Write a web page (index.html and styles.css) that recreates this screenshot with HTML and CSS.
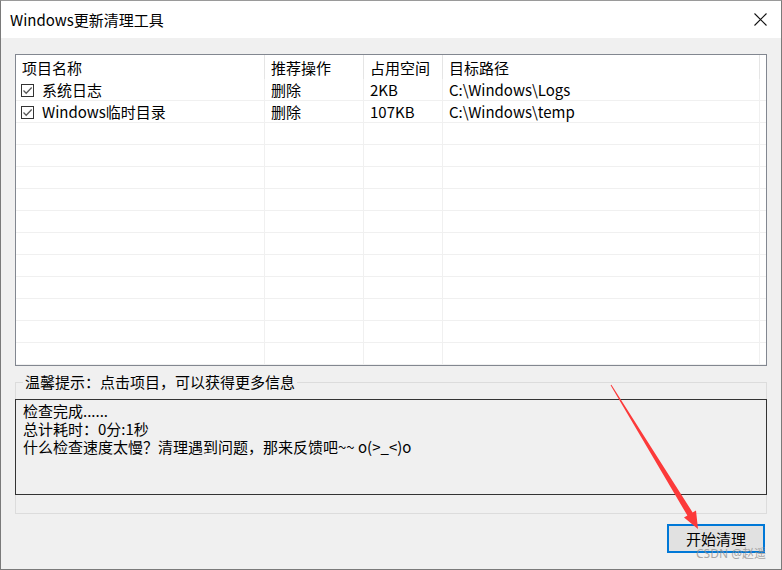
FILE: index.html
```html
<!DOCTYPE html>
<html lang="zh-CN">
<head>
<meta charset="utf-8">
<title>Windows更新清理工具</title>
<link rel="stylesheet" href="styles.css">
</head>
<body>
<div class="window">
  <div class="titlebar">
    <span class="title">Windows更新清理工具</span>
    <span class="close">
      <svg width="13" height="13" viewBox="0 0 13 13"><path d="M0.5 0.5 L12.5 12.5 M12.5 0.5 L0.5 12.5" stroke="#111" stroke-width="1.1" fill="none"/></svg>
    </span>
  </div>
  <div class="client">
    <div class="listview">
      <div class="lv-row lv-head">
        <div class="cell">项目名称</div>
        <div class="cell">推荐操作</div>
        <div class="cell">占用空间</div>
        <div class="cell">目标路径</div>
        <div class="cell filler"></div>
      </div>
      <div class="lv-row">
        <div class="cell first"><span class="chk"><svg width="11" height="11" viewBox="0 0 11 11"><path d="M1.5 5.5 L4.2 8.2 L9.7 2.5" stroke="#5a5a5a" stroke-width="1.3" fill="none"/></svg></span>系统日志</div>
        <div class="cell">删除</div>
        <div class="cell">2KB</div>
        <div class="cell">C:\Windows\Logs</div>
        <div class="cell filler"></div>
      </div>
      <div class="lv-row">
        <div class="cell first"><span class="chk"><svg width="11" height="11" viewBox="0 0 11 11"><path d="M1.5 5.5 L4.2 8.2 L9.7 2.5" stroke="#5a5a5a" stroke-width="1.3" fill="none"/></svg></span>Windows临时目录</div>
        <div class="cell">删除</div>
        <div class="cell">107KB</div>
        <div class="cell">C:\Windows\temp</div>
        <div class="cell filler"></div>
      </div>
      <div class="lv-row"><div class="cell"></div><div class="cell"></div><div class="cell"></div><div class="cell"></div><div class="cell filler"></div></div>
      <div class="lv-row"><div class="cell"></div><div class="cell"></div><div class="cell"></div><div class="cell"></div><div class="cell filler"></div></div>
      <div class="lv-row"><div class="cell"></div><div class="cell"></div><div class="cell"></div><div class="cell"></div><div class="cell filler"></div></div>
      <div class="lv-row"><div class="cell"></div><div class="cell"></div><div class="cell"></div><div class="cell"></div><div class="cell filler"></div></div>
      <div class="lv-row"><div class="cell"></div><div class="cell"></div><div class="cell"></div><div class="cell"></div><div class="cell filler"></div></div>
      <div class="lv-row"><div class="cell"></div><div class="cell"></div><div class="cell"></div><div class="cell"></div><div class="cell filler"></div></div>
      <div class="lv-row"><div class="cell"></div><div class="cell"></div><div class="cell"></div><div class="cell"></div><div class="cell filler"></div></div>
      <div class="lv-row"><div class="cell"></div><div class="cell"></div><div class="cell"></div><div class="cell"></div><div class="cell filler"></div></div>
      <div class="lv-row"><div class="cell"></div><div class="cell"></div><div class="cell"></div><div class="cell"></div><div class="cell filler"></div></div>
      <div class="lv-row"><div class="cell"></div><div class="cell"></div><div class="cell"></div><div class="cell"></div><div class="cell filler"></div></div>
      <div class="lv-row"><div class="cell"></div><div class="cell"></div><div class="cell"></div><div class="cell"></div><div class="cell filler"></div></div>
    </div>
    <fieldset class="group">
      <legend>温馨提示：点击项目，可以获得更多信息</legend>
      <div class="log">
        <div class="log-line">检查完成......</div>
        <div class="log-line">总计耗时：0分:1秒</div>
        <div class="log-line">什么检查速度太慢？清理遇到问题，那来反馈吧~~ o(&gt;_&lt;)o</div>
      </div>
    </fieldset>
    <div class="actions">
      <button class="btn">开始清理</button>
    </div>
  </div>
  <svg class="arrow" width="782" height="570" viewBox="0 0 782 570">
    <polygon points="610.6,385.3 611.4,384.7 692.6,512.4 696,510.4 698,529 684,517.6 687.4,515.6" fill="#fc3a3a"/>
  </svg>
  <span class="watermark">CSDN @赵遥</span>
</div>
</body>
</html>
```
FILE: styles.css
```css
* { box-sizing: border-box; }
html, body { margin: 0; padding: 0; }
body {
  width: 782px;
  height: 570px;
  overflow: hidden;
  font-family: "Noto Sans CJK SC", "Noto Sans", sans-serif;
  font-size: 15px;
  color: #000;
  background: #f0f0f0;
}
.window {
  position: relative;
  width: 782px;
  height: 570px;
  border: 1px solid #7a7a7a;
  border-top-color: #9a9a9a;
  background: #f0f0f0;
  display: flex;
  flex-direction: column;
}
.titlebar {
  height: 37px;
  background: #fff;
  display: flex;
  align-items: center;
  justify-content: space-between;
  padding: 0 14px 0 9px;
  flex: none;
}
.title { font-size: 15px; line-height: 20px; }
.close { display: flex; width: 13px; height: 13px; }
.client {
  flex: 1;
  padding: 16px 0 0 14px;
  display: flex;
  flex-direction: column;
}
.listview {
  width: 752px;
  height: 312px;
  border: 1px solid #828790;
  background: #fff;
  overflow: hidden;
  flex: none;
}
.lv-row {
  display: grid;
  grid-template-columns: 249px 99px 79px 317px 1fr;
  height: 22px;
}
.lv-row .cell {
  border-right: 1px solid #f0f0f0;
  border-bottom: 1px solid #f0f0f0;
  padding: 1px 0 0 6px;
  line-height: 20px;
  white-space: nowrap;
  display: flex;
  align-items: center;
}
.lv-row .cell.filler { border-right: none; }
.lv-row .cell.first { padding-left: 5px; }
.lv-head { height: 24px; }
.lv-head .cell {
  border-bottom: none;
  border-right: 1px solid #e5e5e5;
  padding-top: 1px;
  line-height: 22px;
}
.lv-head .cell:first-child { padding-left: 6px; }
.lv-head .cell.filler { border-right: none; }
.chk {
  width: 13px;
  height: 13px;
  border: 1px solid #333;
  background: #fff;
  display: inline-flex;
  align-items: center;
  justify-content: center;
  margin-right: 8px;
  flex: none;
}
.group {
  margin: 6px 0 0 0;
  padding: 0;
  width: 752px;
  height: 142px;
  border: 1px solid #dcdcdc;
  flex: none;
}
.group legend {
  margin-left: 7px;
  padding: 0 2px;
  font-size: 15px;
  line-height: 20px;
}
.log {
  margin: 7px -1px 0 -1px;
  height: 96px;
  border: 1px solid #333;
  background: #f0f0f0;
  padding: 2px 7px;
  font-size: 15px;
  white-space: nowrap;
}
.log-line {
  height: 18px;
  line-height: 18px;
}
.actions {
  display: flex;
  justify-content: flex-end;
  width: 752px;
  padding-right: 2px;
  margin-top: 10px;
}
.btn {
  width: 98px;
  height: 29px;
  border: 2px solid #0078d7;
  background: #e1e1e1;
  font-family: "Noto Sans CJK SC", "Noto Sans", sans-serif;
  font-size: 15px;
  color: #000;
  padding: 0;
  margin: 0;
  line-height: 25px;
}
.arrow {
  position: absolute;
  left: -1px;
  top: -1px;
  pointer-events: none;
}
.watermark {
  position: absolute;
  right: 15px;
  bottom: 8px;
  font-size: 12px;
  line-height: 14px;
  color: rgba(140, 140, 140, 0.75);
  font-family: "Noto Sans", "Noto Sans CJK SC", sans-serif;
}
```
